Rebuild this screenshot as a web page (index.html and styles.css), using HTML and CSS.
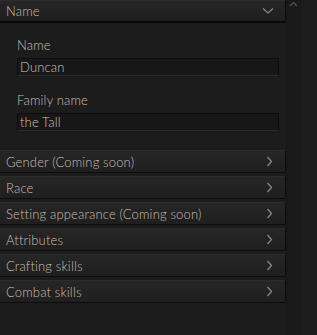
FILE: index.html
```html
<!DOCTYPE html>
<html lang="en">
<head>
    <meta charset="UTF-8">
    <title>Character</title>
    <link rel="stylesheet" href="styles.css">
</head>
<body>
    <div class="page">
        <div class="panel">
            <div class="row row-open">
                <span>Name</span>
                <svg class="chev" width="12" height="8" viewBox="0 0 12 8"><path d="M1 1.5 L6 6 L11 1.5" fill="none" stroke="#8a8680" stroke-width="1.3"/></svg>
            </div>
            <div class="section">
                <label class="field-label">Name</label>
                <div class="field">Duncan</div>
                <label class="field-label">Family name</label>
                <div class="field">the Tall</div>
            </div>
            <div class="list">
                <div class="row"><span>Gender (Coming soon)</span><svg class="chev" width="7" height="11" viewBox="0 0 7 11"><path d="M1.5 1 L5.5 5.5 L1.5 10" fill="none" stroke="#8a8680" stroke-width="1.3"/></svg></div>
                <div class="row"><span>Race</span><svg class="chev" width="7" height="11" viewBox="0 0 7 11"><path d="M1.5 1 L5.5 5.5 L1.5 10" fill="none" stroke="#8a8680" stroke-width="1.3"/></svg></div>
                <div class="row"><span>Setting appearance (Coming soon)</span><svg class="chev" width="7" height="11" viewBox="0 0 7 11"><path d="M1.5 1 L5.5 5.5 L1.5 10" fill="none" stroke="#8a8680" stroke-width="1.3"/></svg></div>
                <div class="row"><span>Attributes</span><svg class="chev" width="7" height="11" viewBox="0 0 7 11"><path d="M1.5 1 L5.5 5.5 L1.5 10" fill="none" stroke="#8a8680" stroke-width="1.3"/></svg></div>
                <div class="row"><span>Crafting skills</span><svg class="chev" width="7" height="11" viewBox="0 0 7 11"><path d="M1.5 1 L5.5 5.5 L1.5 10" fill="none" stroke="#8a8680" stroke-width="1.3"/></svg></div>
                <div class="row"><span>Combat skills</span><svg class="chev" width="7" height="11" viewBox="0 0 7 11"><path d="M1.5 1 L5.5 5.5 L1.5 10" fill="none" stroke="#8a8680" stroke-width="1.3"/></svg></div>
            </div>
        </div>
        <div class="scrollbar">
            <svg width="9" height="6" viewBox="0 0 9 6"><path d="M1 5 L4.5 1.5 L8 5" fill="none" stroke="#555" stroke-width="1.2"/></svg>
        </div>
        <div class="gutter"></div>
    </div>
</body>
</html>
```

FILE: styles.css
```css
body {
    margin: 0;
    background-color: #1c1c1c;
    font-family: Lato, "Open Sans", sans-serif;
    font-weight: 300;
    font-size: 13px;
    letter-spacing: 0.15px;
    color: #c8beb0;
}
.page {
    display: flex;
    height: 335px;
}
.panel {
    width: 286px;
}
.scrollbar {
    width: 14px;
    background-color: #1a1a1a;
    border-left: 1px solid #161616;
    display: flex;
    justify-content: center;
    padding-top: 1px;
    box-sizing: border-box;
}
.gutter {
    flex: 1;
    background-color: #1d1d1d;
    border-left: 1px solid #181818;
}
.row {
    display: flex;
    align-items: center;
    justify-content: space-between;
    height: 23px;
    padding: 0 12px 0 6px;
    background: linear-gradient(#262626, #1f1f1f);
    border: 1px solid #0c0c0c;
    border-left: none;
    border-top-color: #2c2c2c;
    border-radius: 0 2px 2px 0;
    box-sizing: border-box;
}
.row-open {
    border-bottom: 2px solid #080808;
    border-radius: 0;
}
.row-open .chev {
    margin-right: -1px;
}
.section {
    padding: 15px 7px 19px 17px;
}
.field-label {
    display: block;
    height: 14px;
    line-height: 14px;
    margin-bottom: 6px;
}
.field {
    height: 18px;
    line-height: 17px;
    padding-left: 2px;
    background-color: #171717;
    border: 1px solid #0c0c0c;
    border-bottom-color: #2a2a2a;
    box-sizing: border-box;
    margin-bottom: 17px;
    color: #cfc2b0;
}
.field:last-child {
    margin-bottom: 0;
}
.list {
    display: flex;
    flex-direction: column;
    gap: 3px;
}
```
